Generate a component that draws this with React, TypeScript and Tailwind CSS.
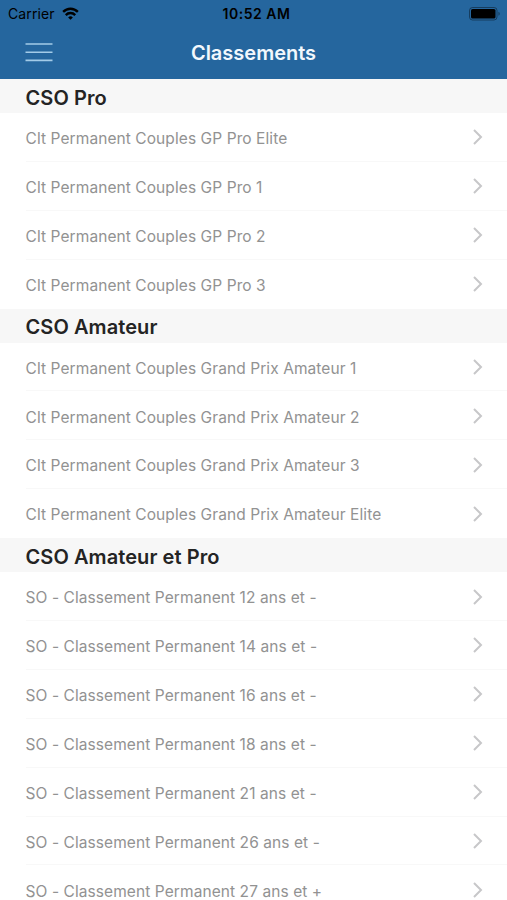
type Section = {
  title: string;
  items: string[];
};

const sections: Section[] = [
  {
    title: "CSO Pro",
    items: [
      "Clt Permanent Couples GP Pro Elite",
      "Clt Permanent Couples GP Pro 1",
      "Clt Permanent Couples GP Pro 2",
      "Clt Permanent Couples GP Pro 3",
    ],
  },
  {
    title: "CSO Amateur",
    items: [
      "Clt Permanent Couples Grand Prix Amateur 1",
      "Clt Permanent Couples Grand Prix Amateur 2",
      "Clt Permanent Couples Grand Prix Amateur 3",
      "Clt Permanent Couples Grand Prix Amateur Elite",
    ],
  },
  {
    title: "CSO Amateur et Pro",
    items: [
      "SO - Classement Permanent 12 ans et -",
      "SO - Classement Permanent 14 ans et -",
      "SO - Classement Permanent 16 ans et -",
      "SO - Classement Permanent 18 ans et -",
      "SO - Classement Permanent 21 ans et -",
      "SO - Classement Permanent 26 ans et -",
      "SO - Classement Permanent 27 ans et +",
    ],
  },
];

function WifiIcon() {
  return (
    <svg viewBox="0 0 18 13" className="h-[13px] w-[17px]" fill="none" stroke="#000" strokeWidth="2.5" preserveAspectRatio="none">
      <path d="M1.2 4.9a11 11 0 0 1 15.6 0" />
      <path d="M4 8.1a7 7 0 0 1 10 0" />
      <path d="M9 12.8 6.5 10.4a3.6 3.6 0 0 1 5 0Z" fill="#000" stroke="none" />
    </svg>
  );
}

function BatteryIcon() {
  return (
    <svg viewBox="0 0 32 14" className="h-3.5 w-8" fill="none">
      <rect x="0.5" y="0.5" width="27.5" height="12.5" rx="3" stroke="#000" strokeOpacity="0.4" />
      <rect x="2" y="2" width="24.5" height="9.5" rx="1.6" fill="#000" />
      <path d="M29.5 4.8c1.6.5 1.6 3.5 0 4Z" fill="#000" fillOpacity="0.45" />
    </svg>
  );
}

function StatusBar() {
  return (
    <div className="grid h-[27px] grid-cols-3 items-center pl-2 pr-1.5 text-[14px] text-black">
      <div className="flex items-center gap-[7px]">
        <span className="tracking-[0.1px]">Carrier</span>
        <WifiIcon />
      </div>
      <span className="pl-1 text-center font-semibold tracking-[0.5px]">10:52 AM</span>
      <div className="flex justify-end">
        <BatteryIcon />
      </div>
    </div>
  );
}

function NavBar() {
  return (
    <div className="grid h-[52px] grid-cols-[53px_1fr_53px] items-center text-white">
      <button type="button" aria-label="Menu" className="pb-0.5 pl-[25px]">
        <svg viewBox="0 0 28 20" className="h-5 w-7" stroke="#a3cbe8" strokeWidth="1.6">
          <path d="M.5 2h27M.5 10.2h27M.5 18.4h27" />
        </svg>
      </button>
      <h1 className="text-center text-[20px] font-semibold text-[#f2f8fd]">Classements</h1>
    </div>
  );
}

function Row({ label }: { label: string }) {
  return (
    <li className="relative flex h-[48.9px] items-center justify-between pl-[25.5px] pr-6 after:absolute after:bottom-0 after:left-[26px] after:right-0 after:h-px after:bg-[#f8f8f8] last:after:hidden">
      <span className="whitespace-nowrap pt-[2.6px] text-[15.5px] tracking-[0.08px] text-[#929292]">{label}</span>
      <svg viewBox="0 0 10 16" className="h-4 w-[10px]" fill="none" stroke="#c7c7c9" strokeWidth="2">
        <path d="m1 1 7 7-7 7" />
      </svg>
    </li>
  );
}

export default function App() {
  return (
    <div className="h-[900px] w-full overflow-hidden bg-white font-['Inter',sans-serif]">
      <header className="bg-[#25669e]">
        <StatusBar />
        <NavBar />
      </header>
      <main>
        {sections.map((section) => (
          <section key={section.title}>
            <h2 className="flex h-[34px] items-center bg-[#f7f7f7] pl-[25.5px] pt-[3.5px] text-[20px] font-semibold tracking-[0.08px] text-[#242424]">
              {section.title}
            </h2>
            <ul>
              {section.items.map((item) => (
                <Row key={item} label={item} />
              ))}
            </ul>
          </section>
        ))}
      </main>
    </div>
  );
}
